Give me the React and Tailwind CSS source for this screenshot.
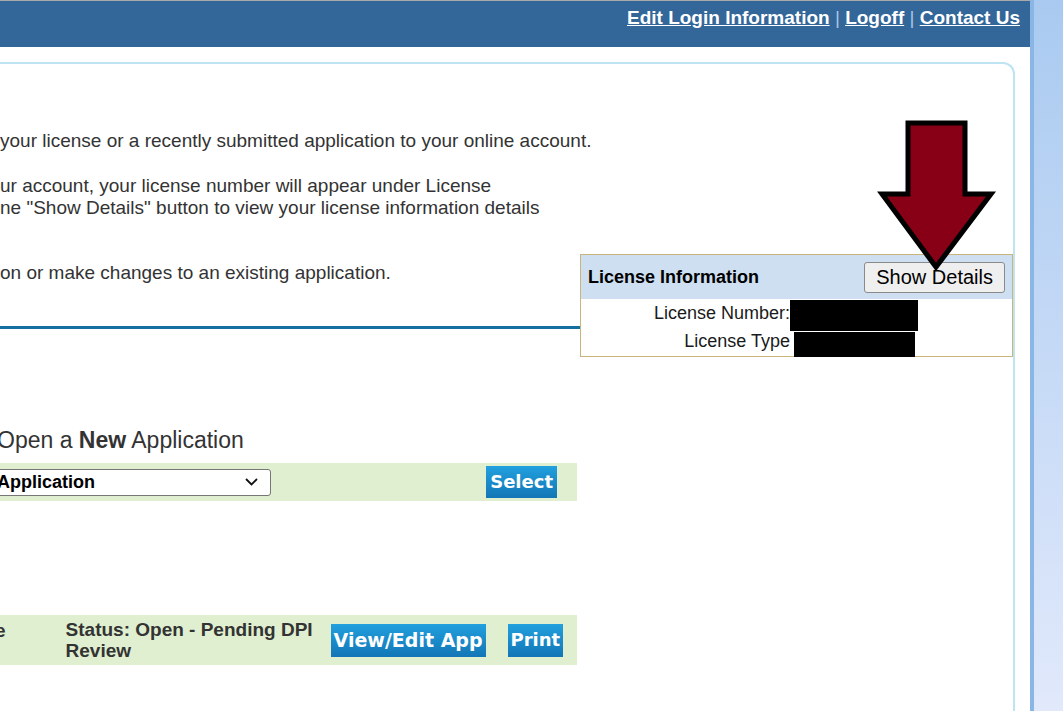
import React from 'react'

const ARIAL = { fontFamily: '"Liberation Sans", Arial, sans-serif' }
const VERD = { fontFamily: '"DejaVu Sans", Verdana, sans-serif' }

function BlueButton({ children, className = '' }) {
  return (
    <button
      style={VERD}
      className={`bg-gradient-to-b from-[#22a0de] to-[#1376b6] text-white font-bold leading-none ${className}`}
    >
      {children}
    </button>
  )
}

function Arrow() {
  return (
    <svg className="absolute left-[875px] top-[115px]" width="125" height="160" viewBox="0 0 125 160">
      <polygon
        points="33,8 90,8 90,79 116,79 61,152 7,79 33,79"
        fill="#870016"
        stroke="#000"
        strokeWidth="5"
        strokeLinejoin="miter"
      />
    </svg>
  )
}

function LicenseBox() {
  return (
    <div className="border border-[#c9b57c] bg-white text-[#1a1a1a]">
      <div className="h-[44px] bg-[#cddff0] flex items-center justify-between pl-[7px] pr-[7px]">
        <span className="font-bold text-[18px] text-black">License Information</span>
        <button className="h-[31px] px-[11px] bg-[#efefef] border border-[#8a8a8a] rounded-[3px] text-[20px] leading-none text-black">
          Show Details
        </button>
      </div>
      <div className="relative h-[28px] flex items-center">
        <span className="w-[209px] text-right text-[18px]">License Number:</span>
        <div className="absolute left-[209px] top-[1px] w-[128px] h-[31px] bg-black" />
      </div>
      <div className="relative h-[29px] flex items-center">
        <span className="w-[209px] text-right text-[18px]">License Type</span>
        <div className="absolute left-[213px] top-[5px] w-[121px] h-[25px] bg-black" />
      </div>
    </div>
  )
}

export default function App() {
  return (
    <div style={ARIAL} className="relative w-[1063px] h-[711px] overflow-hidden bg-white flex">
      <div className="w-[1030px] flex flex-col">
        <div className="h-[47px] border-t border-[#a9a9a9] bg-[#336699] flex justify-end pt-[6px] pr-[10px]">
          <div className="text-[19px] leading-[22px] font-bold text-white">
            <a className="underline">Edit Login Information</a>
            <span className="font-normal text-[#a7c6e6]"> | </span>
            <a className="underline">Logoff</a>
            <span className="font-normal text-[#a7c6e6]"> | </span>
            <a className="underline">Contact Us</a>
          </div>
        </div>

        <div className="flex-1 pt-[15px] pr-[15px]">
          <div className="h-full border-t-2 border-r-2 border-[#bee3f3] rounded-tr-[12px] flex">
            <div className="w-[580px] text-[#333] text-[19px] leading-[22px]">
              <p className="mt-[66px] whitespace-nowrap">your license or a recently submitted application to your online account.</p>
              <p className="mt-[23px] whitespace-nowrap">
                ur account, your license number will appear under License
                <br />
                ne "Show Details" button to view your license information details
              </p>
              <p className="mt-[43px] whitespace-nowrap">on or make changes to an existing application.</p>
              <div className="mt-[42px] h-[3px] bg-[#1570a2]" />

              <h2 className="mt-[97px] text-[23px] leading-[28px] whitespace-nowrap -ml-[3px]">
                Open a <b>New</b> Application
              </h2>
              <div className="mt-[9px] w-[577px] h-[38px] bg-[#dfefd0] flex items-center justify-between pr-[20px]">
                <div className="-ml-[10px] w-[281px] h-[27px] bg-white border border-[#777] rounded-[3px] flex items-center justify-between pl-[6px] pr-[12px]">
                  <span className="font-bold text-[18px] text-black">Application</span>
                  <svg width="13" height="8" viewBox="0 0 13 8">
                    <path d="M1 1 L6.5 6.5 L12 1" fill="none" stroke="#111" strokeWidth="1.8" />
                  </svg>
                </div>
                <BlueButton className="h-[32px] px-[4px] text-[18px]">Select</BlueButton>
              </div>

              <div className="mt-[114px] w-[577px] h-[50px] bg-[#dfefd0] flex items-center">
                <span className="self-start mt-[5px] -ml-[5px] font-bold text-[19px] leading-[21px]">e</span>
                <div className="ml-[60px] w-[265px] font-bold text-[19px] leading-[21px]">
                  Status: Open - Pending DPI
                  <br />
                  Review
                </div>
                <BlueButton className="h-[33px] px-[3px] text-[19px]">View/Edit App</BlueButton>
                <BlueButton className="ml-[22px] h-[33px] px-[3px] text-[18px]">Print</BlueButton>
              </div>
            </div>
            <div className="flex-1 pt-[190px]">
              <LicenseBox />
            </div>
          </div>
        </div>
      </div>
      <div className="flex-1 border-l-4 border-[#8ab6e6] bg-gradient-to-b from-[#a9caf0] to-[#e1e9fb]" />
      <Arrow />
    </div>
  )
}
